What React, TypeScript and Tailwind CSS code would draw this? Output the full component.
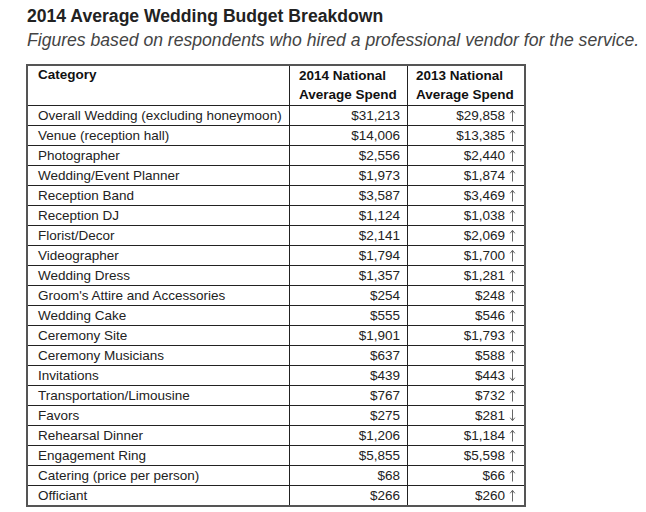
import React from "react";

type Row = { cat: string; a: string; b: string; up: boolean };

const rows: Row[] = [
  { cat: "Overall Wedding (excluding honeymoon)", a: "$31,213", b: "$29,858", up: true },
  { cat: "Venue (reception hall)", a: "$14,006", b: "$13,385", up: true },
  { cat: "Photographer", a: "$2,556", b: "$2,440", up: true },
  { cat: "Wedding/Event Planner", a: "$1,973", b: "$1,874", up: true },
  { cat: "Reception Band", a: "$3,587", b: "$3,469", up: true },
  { cat: "Reception DJ", a: "$1,124", b: "$1,038", up: true },
  { cat: "Florist/Decor", a: "$2,141", b: "$2,069", up: true },
  { cat: "Videographer", a: "$1,794", b: "$1,700", up: true },
  { cat: "Wedding Dress", a: "$1,357", b: "$1,281", up: true },
  { cat: "Groom's Attire and Accessories", a: "$254", b: "$248", up: true },
  { cat: "Wedding Cake", a: "$555", b: "$546", up: true },
  { cat: "Ceremony Site", a: "$1,901", b: "$1,793", up: true },
  { cat: "Ceremony Musicians", a: "$637", b: "$588", up: true },
  { cat: "Invitations", a: "$439", b: "$443", up: false },
  { cat: "Transportation/Limousine", a: "$767", b: "$732", up: true },
  { cat: "Favors", a: "$275", b: "$281", up: false },
  { cat: "Rehearsal Dinner", a: "$1,206", b: "$1,184", up: true },
  { cat: "Engagement Ring", a: "$5,855", b: "$5,598", up: true },
  { cat: "Catering (price per person)", a: "$68", b: "$66", up: true },
  { cat: "Officiant", a: "$266", b: "$260", up: true },
];

function Arrow({ up }: { up: boolean }) {
  return (
    <svg
      width="7"
      height="13"
      viewBox="0 0 7 13"
      className="ml-[4px] inline-block"
      style={{ transform: up ? undefined : "rotate(180deg)" }}
    >
      <path d="M3.5 1.5 V12.5" stroke="#666" strokeWidth="1" fill="none" />
      <path d="M1.2 4.3 L3.5 1.3 L5.8 4.3" stroke="#666" strokeWidth="1" fill="none" />
    </svg>
  );
}

export default function App() {
  return (
    <div
      className="min-h-[512px] w-[646px] bg-white pl-[27px] pt-[6px] text-[#222]"
      style={{ fontFamily: '"Liberation Sans", Arial, sans-serif' }}
    >
      <h1 className="text-[17.6px] font-bold leading-[20px] text-[#222]">
        2014 Average Wedding Budget Breakdown
      </h1>
      <p className="mt-[4px] text-[17.6px] italic leading-[20px] text-[#444]">
        Figures based on respondents who hired a professional vendor for the service.
      </p>
      <div className="ml-[-1px] mt-[14px] w-[500px] border-2 border-[#555] text-[13.5px]">
        <div className="grid grid-cols-[262px_118px_116px] border-b border-[#222] font-bold text-[#111]">
          <div className="h-[39px] border-r border-[#222] px-[10px] leading-[18px]">Category</div>
          <div className="h-[39px] border-r border-[#222] px-[9px] leading-[19px]">
            <div>2014 National</div>
            <div>Average Spend</div>
          </div>
          <div className="h-[39px] px-[8px] leading-[19px]">
            <div>2013 National</div>
            <div>Average Spend</div>
          </div>
        </div>
        {rows.map((r, i) => (
          <div
            key={r.cat}
            className={
              i === rows.length - 1
                ? "grid grid-cols-[262px_118px_116px]"
                : "grid grid-cols-[262px_118px_116px] border-b border-[#222]"
            }
          >
            <div className="h-[19px] border-r border-[#222] px-[10px] leading-[19px] whitespace-nowrap">
              {r.cat}
            </div>
            <div className="h-[19px] border-r border-[#222] pr-[7px] text-right leading-[19px]">
              {r.a}
            </div>
            <div className="flex h-[19px] items-center justify-end pr-[8px] leading-[19px]">
              <span>{r.b}</span>
              <Arrow up={r.up} />
            </div>
          </div>
        ))}
      </div>
    </div>
  );
}
